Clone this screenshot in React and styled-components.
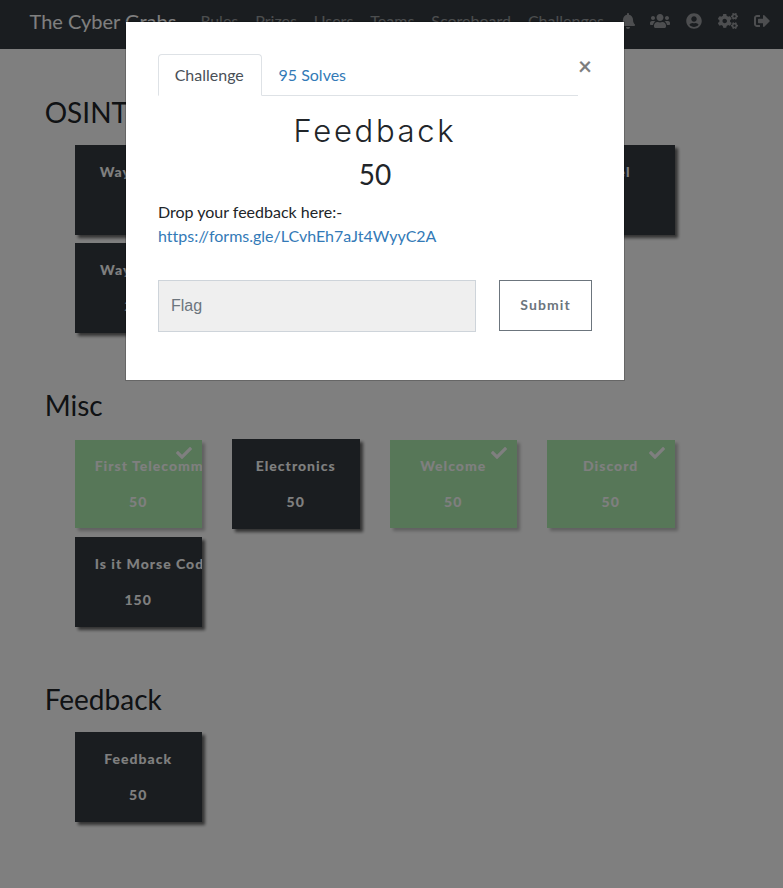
import React from "react";
import styled, { createGlobalStyle, css } from "styled-components";
import {
  FaBell,
  FaUsers,
  FaUserCircle,
  FaCogs,
  FaSignOutAlt,
  FaCheck,
} from "react-icons/fa";

const GlobalStyle = createGlobalStyle`
  * { box-sizing: border-box; }
  body {
    margin: 0;
    background: #fff;
    color: #212529;
    font: 400 16px/1.5 Lato, "Open Sans", sans-serif;
    font-variant-ligatures: none;
  }
`;

const Page = styled.div`
  height: 888px;
  overflow: hidden;
`;

const Navbar = styled.nav`
  display: flex;
  align-items: center;
  height: 49px;
  padding: 0 0 7px 29.5px;
  background: #343a40;
  white-space: nowrap;
`;

const Brand = styled.span`
  width: 147px;
  margin-right: 24px;
  font-size: 20px;
  line-height: 30px;
  color: #fff;
`;

const NavLinks = styled.div`
  display: flex;
  align-items: center;
  gap: 17px;
  color: rgba(255, 255, 255, 0.5);
`;

const NavIcons = styled.div`
  display: flex;
  align-items: center;
  gap: 15.8px;
  margin-left: 16.6px;
  color: rgba(255, 255, 255, 0.5);
`;

const NavIcon = styled.span`
  display: flex;
  justify-content: center;
  width: ${(p) => p.$width}px;

  svg {
    flex: none;
    width: ${(p) => p.$width}px;
    height: 16px;
  }
`;

const Main = styled.main`
  padding: 45px 45px 0 44.7px;
`;

const Category = styled.section`
  height: 293.5px;
`;

const CategoryTitle = styled.h3`
  margin: 0 0 16.5px;
  padding-top: 0.5px;
  font-size: 28px;
  font-weight: 400;
  line-height: 34px;
`;

const Grid = styled.div`
  display: grid;
  grid-template-columns: repeat(4, 127.5px);
  grid-auto-rows: 90px;
  align-items: center;
  gap: 8px 30px;
  padding-left: 30px;
`;

const Card = styled.button`
  position: relative;
  display: block;
  width: 100%;
  height: 90px;
  padding: 15px 19.5px 15px 19px;
  border: 0;
  overflow: hidden;
  background: #343a40;
  color: #fff;
  font: 900 14px/24px Lato, sans-serif;
  letter-spacing: 1px;
  white-space: nowrap;
  box-shadow: 3px 3px 3px rgba(0, 0, 0, 0.6);

  ${(p) =>
    p.$solved &&
    css`
      height: 88px;
      padding-top: 14px;
      background: #37d63e;
      opacity: 0.4;
    `}
`;

const CardName = styled.span`
  display: flex;
  justify-content: ${(p) => (p.$long ? "flex-start" : "center")};
  padding-left: ${(p) => (p.$long ? "1px" : "0")};
  margin-bottom: 12px;
`;

const CardPoints = styled.span`
  display: block;
  text-align: center;
`;

const SolvedMark = styled(FaCheck)`
  position: absolute;
  top: 5px;
  right: 10px;
  width: 16px;
  height: 16px;
`;

const Backdrop = styled.div`
  position: fixed;
  inset: 0;
  display: flex;
  align-items: flex-start;
  padding: 21px 0 0 125px;
  background: rgba(0, 0, 0, 0.5);
`;

const Modal = styled.div`
  width: 500px;
  height: 360px;
  padding: 32px;
  border: 1px solid rgba(0, 0, 0, 0.2);
  background: #fff;
  background-clip: padding-box;
`;

const ModalTop = styled.div`
  display: flex;
  align-items: flex-start;
`;

const Tabs = styled.div`
  display: flex;
  flex: 0 0 420px;
  height: 42px;
  border-bottom: 1px solid #dee2e6;
`;

const Tab = styled.button`
  width: ${(p) => (p.$active ? "104px" : "auto")};
  height: 42px;
  padding: 8px 17px 8px 15.5px;
  border: 1px solid transparent;
  border-radius: 4px 4px 0 0;
  background: transparent;
  color: #337ab7;
  font: 16px/24px Lato, sans-serif;

  ${(p) =>
    p.$active &&
    css`
      border-color: #dee2e6 #dee2e6 #fff;
      background: #fff;
      color: #495057;
    `}
`;

const Close = styled.button`
  width: 13px;
  padding: 0;
  border: 0;
  background: none;
  color: #000;
  opacity: 0.5;
  font: 700 24px/24px Lato, sans-serif;
`;

const ChallengeTitle = styled.h2`
  margin: 16px 0 7px;
  font-family: Inter, "Open Sans", sans-serif;
  font-size: 31px;
  line-height: 38px;
  font-weight: 300;
  letter-spacing: 2.7px;
  text-align: center;
`;

const Value = styled.h3`
  margin: 0 0 9px;
  font-size: 28px;
  line-height: 34px;
  font-weight: 400;
  text-align: center;
`;

const Description = styled.p`
  margin: 0;
  line-height: 24px;
`;

const FormLink = styled.a`
  display: block;
  color: #337ab7;
  text-decoration: none;
`;

const FlagForm = styled.div`
  display: flex;
  align-items: flex-start;
  gap: 23px;
  margin-top: 32px;
`;

const FlagInput = styled.input`
  width: 318px;
  height: 52px;
  padding: 0 12px;
  border: 1px solid #ced4da;
  border-radius: 0;
  background: #efefef;
  font: 16px "Liberation Sans", Arial, sans-serif;

  &::placeholder {
    color: #6c757d;
    opacity: 1;
  }
`;

const Submit = styled.button`
  width: 93px;
  height: 51px;
  padding: 0 0 2px;
  border: 1px solid #6c757d;
  background: #fff;
  color: #6c757d;
  font: 700 14px Lato, sans-serif;
  letter-spacing: 1.1px;
`;

const links = ["Rules", "Prizes", "Users", "Teams", "Scoreboard", "Challenges"];

const icons = [
  { Icon: FaBell, width: 14 },
  { Icon: FaUsers, width: 20 },
  { Icon: FaUserCircle, width: 16 },
  { Icon: FaCogs, width: 20 },
  { Icon: FaSignOutAlt, width: 16 },
];

const categories = [
  {
    name: "OSINT",
    items: [
      { name: "Way Down", points: 50 },
      { name: "Hidden", points: 50 },
      { name: "Travel", points: 50 },
      { name: "Hotel", points: 50 },
      { name: "Way Dawn", points: 200 },
    ],
  },
  {
    name: "Misc",
    items: [
      { name: "First Telecommunication", points: 50, solved: true, long: true },
      { name: "Electronics", points: 50 },
      { name: "Welcome", points: 50, solved: true },
      { name: "Discord", points: 50, solved: true },
      { name: "Is it Morse Code?", points: 150, long: true },
    ],
  },
  { name: "Feedback", items: [{ name: "Feedback", points: 50 }] },
];

export default function App() {
  return (
    <Page>
      <GlobalStyle />
      <Navbar>
        <Brand>The Cyber Grabs</Brand>
        <NavLinks>
          {links.map((label) => (
            <span key={label}>{label}</span>
          ))}
        </NavLinks>
        <NavIcons>
          {icons.map(({ Icon, width }, index) => (
            <NavIcon key={index} $width={width}>
              <Icon />
            </NavIcon>
          ))}
        </NavIcons>
      </Navbar>
      <Main>
        {categories.map((category) => (
          <Category key={category.name}>
            <CategoryTitle>{category.name}</CategoryTitle>
            <Grid>
              {category.items.map((item) => (
                <Card key={item.name} $solved={item.solved}>
                  {item.solved && <SolvedMark />}
                  <CardName $long={item.long}>{item.name}</CardName>
                  <CardPoints>{item.points}</CardPoints>
                </Card>
              ))}
            </Grid>
          </Category>
        ))}
      </Main>
      <Backdrop>
        <Modal>
          <ModalTop>
            <Tabs>
              <Tab $active>Challenge</Tab>
              <Tab>95 Solves</Tab>
            </Tabs>
            <Close aria-label="Close">×</Close>
          </ModalTop>
          <ChallengeTitle>Feedback</ChallengeTitle>
          <Value>50</Value>
          <Description>
            Drop your feedback here:-
            <FormLink href="#">https://forms.gle/LCvhEh7aJt4WyyC2A</FormLink>
          </Description>
          <FlagForm>
            <FlagInput placeholder="Flag" />
            <Submit>Submit</Submit>
          </FlagForm>
        </Modal>
      </Backdrop>
    </Page>
  );
}
